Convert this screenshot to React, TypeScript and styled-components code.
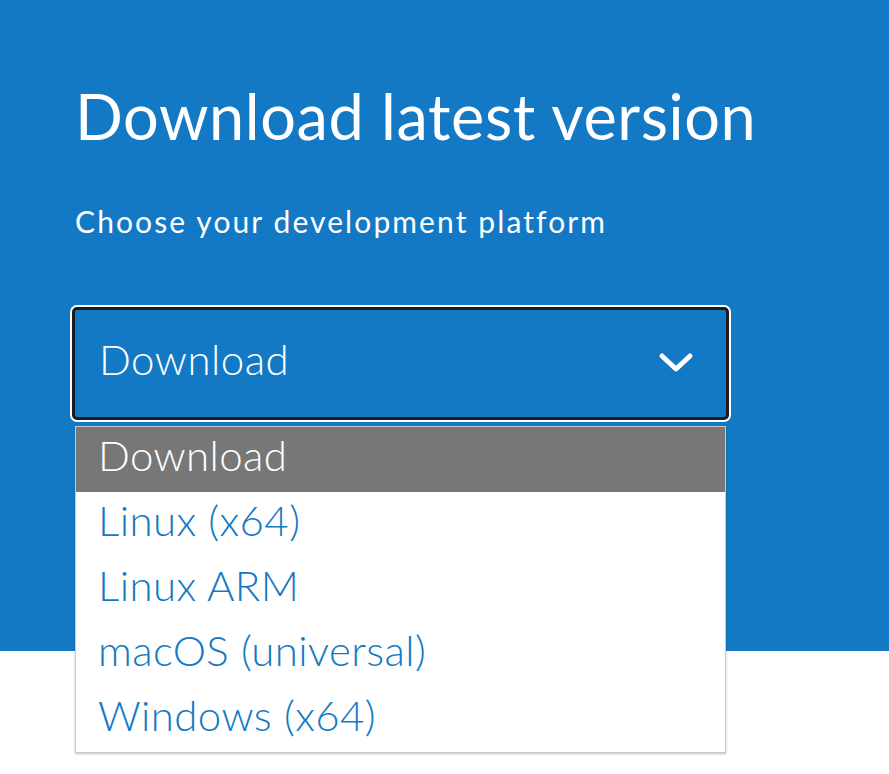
import { useState } from "react";
import styled, { createGlobalStyle } from "styled-components";

const GlobalStyle = createGlobalStyle`
  html, body {
    margin: 0;
    padding: 0;
    background: #ffffff;
    font-family: Lato, "Open Sans", "Liberation Sans", sans-serif;
  }
`;

const Page = styled.div`
  position: relative;
  height: 774px;
  overflow: hidden;
`;

const Hero = styled.section`
  background: #1379c5;
  height: 651px;
  padding: 78px 0 0 75px;
  box-sizing: border-box;
  color: #ffffff;
`;

const Title = styled.h1`
  margin: 0;
  font-size: 63px;
  font-weight: 400;
  line-height: 76px;
  letter-spacing: 0.6px;
`;

const Subtitle = styled.p`
  margin: 49px 0 0;
  font-size: 30px;
  font-weight: 400;
  line-height: 36px;
  letter-spacing: 2.1px;
`;

const SelectWrap = styled.div`
  position: relative;
  width: 657px;
  margin: 68px 0 0 -3px;
`;

const SelectBox = styled.button`
  display: flex;
  align-items: center;
  justify-content: space-between;
  width: 100%;
  height: 113px;
  box-sizing: border-box;
  padding: 0 32px 10px 24px;
  background: #1379c5;
  border: 3px solid #1c1c1c;
  border-radius: 5px;
  box-shadow: 0 0 0 2px #ffffff;
  color: #ffffff;
  font-family: inherit;
  font-size: 42px;
  font-weight: 300;
  letter-spacing: 0.5px;
  cursor: pointer;
  text-align: left;

  svg {
    margin-top: 8px;
  }
`;

const Menu = styled.ul`
  position: absolute;
  top: 119px;
  left: 3px;
  width: 651px;
  margin: 0;
  padding: 0;
  list-style: none;
  background: #ffffff;
  border: 1px solid #cccccc;
  box-shadow: 0 1px 2px rgba(0, 0, 0, 0.25);
  box-sizing: border-box;
`;

const Option = styled.li<{ $active: boolean }>`
  height: 65px;
  box-sizing: border-box;
  display: flex;
  align-items: center;
  padding: 0 0 10px 22px;
  font-size: 42px;
  font-weight: 300;
  letter-spacing: 0.4px;
  color: ${(p) => (p.$active ? "#ffffff" : "#1379c5")};
  background: ${(p) => (p.$active ? "#777777" : "#ffffff")};
  cursor: pointer;
`;

const platforms = [
  "Download",
  "Linux (x64)",
  "Linux ARM",
  "macOS (universal)",
  "Windows (x64)",
];

function Chevron() {
  return (
    <svg width="36" height="22" viewBox="0 0 36 22" fill="none">
      <path
        d="M4 4 L18 17 L32 4"
        stroke="#ffffff"
        strokeWidth="5"
        strokeLinecap="round"
        strokeLinejoin="round"
      />
    </svg>
  );
}

export default function App() {
  const [selected, setSelected] = useState(0);

  return (
    <Page>
      <GlobalStyle />
      <Hero>
        <Title>Download latest version</Title>
        <Subtitle>Choose your development platform</Subtitle>
        <SelectWrap>
          <SelectBox>
            <span>{platforms[selected]}</span>
            <Chevron />
          </SelectBox>
          <Menu>
            {platforms.map((name, i) => (
              <Option key={name} $active={i === 0} onClick={() => setSelected(i)}>
                {name}
              </Option>
            ))}
          </Menu>
        </SelectWrap>
      </Hero>
    </Page>
  );
}
